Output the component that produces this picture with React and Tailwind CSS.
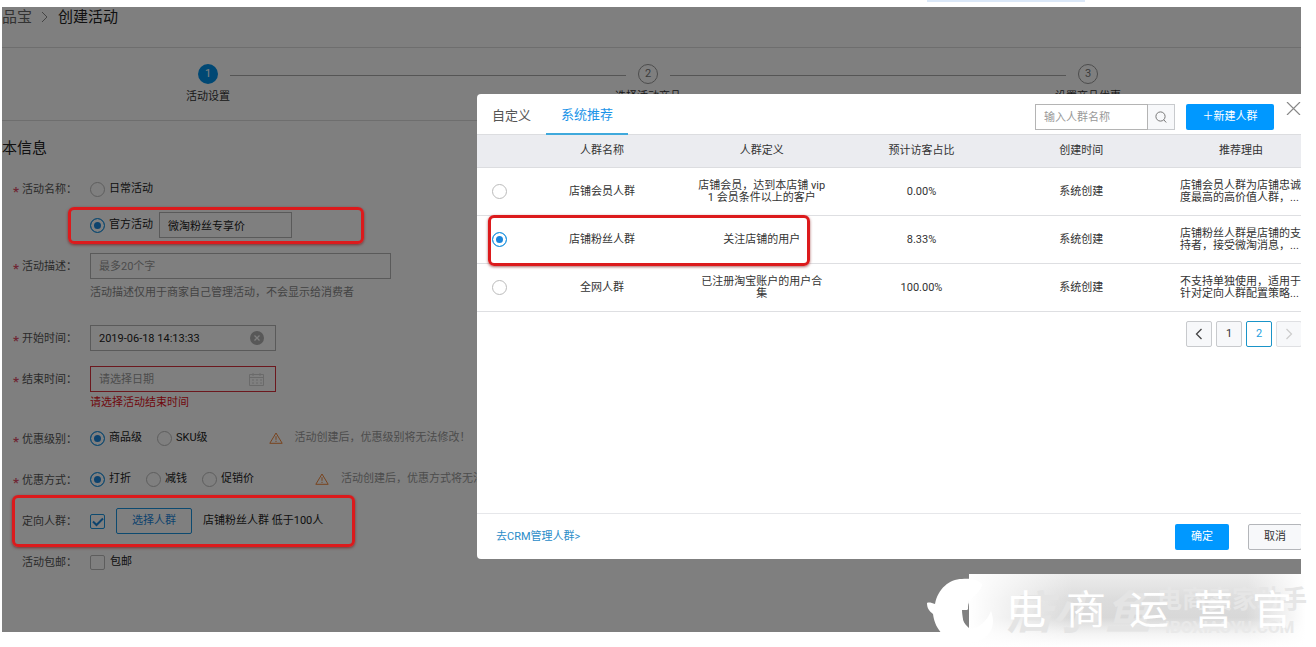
import React, { useState } from 'react';

const steps = ['活动设置', '选择活动商品', '设置商品优惠'];

const crowds = [
  {
    id: 'member',
    name: '店铺会员人群',
    definition: '店铺会员，达到本店铺 vip 1 会员条件以上的客户',
    ratio: '0.00%',
    reason: ['店铺会员人群为店铺忠诚', '度最高的高价值人群，...'],
  },
  {
    id: 'fans',
    name: '店铺粉丝人群',
    definition: '关注店铺的用户',
    ratio: '8.33%',
    reason: ['店铺粉丝人群是店铺的支', '持者，接受微淘消息，...'],
  },
  {
    id: 'all',
    name: '全网人群',
    definition: '已注册淘宝账户的用户合集',
    ratio: '100.00%',
    reason: ['不支持单独使用，适用于', '针对定向人群配置策略...'],
  },
];

const columns = ['人群名称', '人群定义', '预计访客占比', '创建时间', '推荐理由'];

const radioClass =
  'appearance-none shrink-0 size-[15px] rounded-full border border-[#bbb] bg-white checked:border-[#1a94e0] checked:bg-[#1a86dc] checked:shadow-[inset_0_0_0_3px_#fff]';

const inputClass =
  'h-[26px] border border-[#b4b4b4] bg-white px-2 leading-4 text-[#222] placeholder:text-[#999] focus:outline-none';

const Radio = ({ label, ...props }) => (
  <label className="flex items-center gap-1 text-[#222]">
    <input type="radio" className={radioClass} {...props} />
    {label}
  </label>
);

const Row = ({ label, htmlFor, required, children }) => (
  <div className="flex items-start">
    <div className="flex h-[26px] w-[88px] shrink-0 items-center pl-[11px] pt-[2px] text-[#555]">
      <span className="w-[9px] pt-1 text-[13px] font-bold text-[#e0506a]">{required && '*'}</span>
      <label htmlFor={htmlFor} className="whitespace-nowrap">{label}：</label>
    </div>
    <div className="min-w-0 flex-1">{children}</div>
  </div>
);

const Highlight = ({ className }) => (
  <div
    className={`pointer-events-none absolute z-20 rounded-md border-[3px] border-[#dc1a1c] shadow-[0_1px_3px_rgba(120,0,0,0.6)] ${className}`}
  />
);

const Warning = ({ children }) => (
  <p className="flex items-center gap-3 whitespace-nowrap text-[#999]">
    <svg width="14" height="12" viewBox="0 0 14 12" fill="none" stroke="#f0873c">
      <path d="M7 1 13.2 11.3H.8Z" strokeLinejoin="round" />
      <path d="M7 4.2v3.6M7 8.8v1.2" />
    </svg>
    {children}
  </p>
);

const Watermark = () => (
  <svg
    className="pointer-events-none absolute right-0 top-[574px] z-30"
    width="389"
    height="73"
    viewBox="0 0 389 73"
    fontFamily="'Noto Sans CJK SC', sans-serif"
  >
    <defs>
      <linearGradient id="wmBase" x1="0" y1="0" x2="0" y2="1">
        <stop offset="0" stopColor="#ececec" />
        <stop offset="0.35" stopColor="#dcdcdc" />
        <stop offset="0.6" stopColor="#d8d8d8" />
        <stop offset="0.82" stopColor="#f4f4f4" />
        <stop offset="1" stopColor="#fff" />
      </linearGradient>
      <linearGradient id="wmSides">
        <stop offset="0" stopColor="#fff" />
        <stop offset="0.3" stopColor="#fff" stopOpacity="0" />
        <stop offset="0.8" stopColor="#fff" stopOpacity="0" />
        <stop offset="0.97" stopColor="#fff" />
      </linearGradient>
    </defs>
    <rect x="42" width="347" height="73" fill="url(#wmBase)" />
    <rect x="42" width="347" height="73" fill="url(#wmSides)" />
    <path
      d="M0 29c2-1 5 0 8 1C11 15 22 5 35 5c9-1 16 1 20 5 0 5-5 9-11 16-3 3-3 6-3 9l-5 6c-1 6 2 10 8 14 8-1 16-8 20-18 3 8 3 17-3 24-7 7-17 8-27 7C20 67 8 57 6 40 2 37 0 34 0 29Z"
      fill="#fff"
    />
    <path d="M41 26v10h-6c0 7 2 13 7 18Z" fill="#808080" />
    <text y="55" fontSize="46" fontWeight="700" fontStyle="italic" fill="#e4e4e4">
      <tspan x="80">店</tspan>
      <tspan x="125">小</tspan>
      <tspan x="178">鱼</tspan>
    </text>
    <text x="230" y="34" fontSize="25" fontWeight="700" fill="#e6e6e6">电商卖家助手</text>
    <text x="238" y="59" fontSize="17" fontWeight="700" fill="#e9e9e9" fontFamily="Roboto, sans-serif">
      IBOXIAOYU.COM
    </text>
    <text y="50" fontSize="40" fontWeight="400" fill="#fff">
      <tspan x="79">电</tspan>
      <tspan x="139">商</tspan>
      <tspan x="202">运</tspan>
      <tspan x="266">营</tspan>
      <tspan x="325">官</tspan>
    </text>
  </svg>
);

const ActivityForm = () => {
  const [form, setForm] = useState({
    type: 'official',
    name: '微淘粉丝专享价',
    desc: '',
    start: '2019-06-18 14:13:33',
    end: '',
    level: 'item',
    method: 'discount',
    targeted: true,
    freeShipping: false,
  });

  const set = (key, value) => setForm({ ...form, [key]: value });

  return (
    <form className="flex flex-col gap-[15px] pb-[57px]" onSubmit={(e) => e.preventDefault()}>
      <Row label="活动名称" htmlFor="daily" required>
        <div className="flex h-[26px] items-center">
          <Radio id="daily" name="type" label="日常活动" checked={form.type === 'daily'} onChange={() => set('type', 'daily')} />
        </div>
        <div className="relative mt-[10px] flex h-[26px] items-center gap-[6px]">
          <Radio name="type" label="官方活动" checked={form.type === 'official'} onChange={() => set('type', 'official')} />
          <input
            aria-label="官方活动名称"
            className={`${inputClass} w-[133px]`}
            value={form.name}
            onChange={(e) => set('name', e.target.value)}
          />
          <Highlight className="-left-[22px] -top-[5px] h-[37px] w-[296px]" />
        </div>
      </Row>

      <Row label="活动描述" htmlFor="desc" required>
        <input
          id="desc"
          className={`${inputClass} block w-[301px]`}
          placeholder="最多20个字"
          value={form.desc}
          onChange={(e) => set('desc', e.target.value)}
        />
        <p className="mb-2 mt-[5px] leading-[18px] text-[#888]">活动描述仅用于商家自己管理活动，不会显示给消费者</p>
      </Row>

      <Row label="开始时间" htmlFor="start" required>
        <div className="relative w-[186px]">
          <input id="start" className={`${inputClass} block w-full`} value={form.start} onChange={(e) => set('start', e.target.value)} />
          <button type="button" aria-label="清除" className="absolute right-[12px] top-[6px]" onClick={() => set('start', '')}>
            <svg width="14" height="14" viewBox="0 0 14 14">
              <circle cx="7" cy="7" r="7" fill="#b0b0b0" />
              <path d="m4.5 4.5 5 5m0-5-5 5" stroke="#fff" strokeWidth="1.3" />
            </svg>
          </button>
        </div>
      </Row>

      <Row label="结束时间" htmlFor="end" required>
        <div className="relative w-[186px]">
          <input
            id="end"
            className="block h-[26px] w-full border border-[#d8303c] bg-white px-2 leading-4 placeholder:text-[#999] focus:outline-none"
            placeholder="请选择日期"
            value={form.end}
            onChange={(e) => set('end', e.target.value)}
          />
          <svg className="absolute right-[12px] top-[7px]" width="15" height="13" viewBox="0 0 15 13" fill="none" stroke="#d4d4d4">
            <path d="M.5 1.5h14v11H.5zM.5 4.5h14M4 0v3m7-3v3M3 7h2m2 0h2m2 0h2M3 10h2m2 0h2m2 0h2" />
          </svg>
        </div>
        <p className="mt-[3px] leading-4 text-[#e00f20]">请选择活动结束时间</p>
      </Row>

      <Row label="优惠级别" htmlFor="item" required>
        <div className="-mt-px flex h-[26px] items-center gap-[15px]">
          <Radio id="item" name="level" label="商品级" checked={form.level === 'item'} onChange={() => set('level', 'item')} />
          <Radio name="level" label="SKU级" checked={form.level === 'sku'} onChange={() => set('level', 'sku')} />
          <div className="ml-[46px]">
            <Warning>活动创建后，优惠级别将无法修改！</Warning>
          </div>
        </div>
      </Row>

      <Row label="优惠方式" htmlFor="discount" required>
        <div className="-mt-px flex h-[26px] items-center gap-[15px]">
          <Radio id="discount" name="method" label="打折" checked={form.method === 'discount'} onChange={() => set('method', 'discount')} />
          <Radio name="method" label="减钱" checked={form.method === 'minus'} onChange={() => set('method', 'minus')} />
          <Radio name="method" label="促销价" checked={form.method === 'promo'} onChange={() => set('method', 'promo')} />
          <div className="ml-[46px]">
            <Warning>活动创建后，优惠方式将无法修改！</Warning>
          </div>
        </div>
      </Row>

      <div className="relative">
        <Row label="定向人群" htmlFor="targeted">
          <div className="flex h-[26px] items-center gap-[11px]">
            <span className="relative size-[15px]">
              <input
                id="targeted"
                type="checkbox"
                className="block size-[15px] appearance-none rounded-xs border border-[#bbb] bg-white checked:border-[#1a94e0]"
                checked={form.targeted}
                onChange={(e) => set('targeted', e.target.checked)}
              />
              {form.targeted && (
                <svg className="pointer-events-none absolute inset-0" width="15" height="15" fill="none" stroke="#1a86dc" strokeWidth="2">
                  <path d="m3 7.5 3.5 3.5L13 4.5" />
                </svg>
              )}
            </span>
            <button type="button" className="h-[26px] w-[76px] rounded-xs border border-[#1a94e0] text-[#1a86dc]">
              选择人群
            </button>
            <span className="text-[#222]">店铺粉丝人群 低于100人</span>
          </div>
        </Row>
        <Highlight className="-top-[13px] left-[10px] h-[52px] w-[343px]" />
      </div>

      <Row label="活动包邮" htmlFor="shipping">
        <div className="flex h-[26px] items-center gap-[5px]">
          <input
            id="shipping"
            type="checkbox"
            className="size-[15px] appearance-none rounded-xs border border-[#bbb] bg-white checked:bg-[#1a86dc]"
            checked={form.freeShipping}
            onChange={(e) => set('freeShipping', e.target.checked)}
          />
          <span className="text-[#222]">包邮</span>
        </div>
      </Row>
    </form>
  );
};

const CrowdDialog = () => {
  const [selected, setSelected] = useState('fans');
  const [keyword, setKeyword] = useState('');

  return (
    <div
      role="dialog"
      aria-label="选择人群"
      className="-mr-5 ml-[475px] mt-[87px] flex min-w-0 flex-1 flex-col self-start rounded-sm bg-white text-[#333]"
    >
      <div className="flex h-10 items-start">
        <div role="tablist" className="relative flex text-[13px] leading-5">
          <button role="tab" className="h-[41px] px-[15px] pt-[2px] text-[#555]">自定义</button>
          <button role="tab" aria-selected="true" className="h-[41px] border-b-2 border-[#3fa9dc] px-[15px] pt-[3px] text-[#1a94e8]">
            系统推荐
          </button>
        </div>
        <div className="ml-auto mr-5 mt-[10px] flex">
          <input
            aria-label="输入人群名称"
            placeholder="输入人群名称"
            className={`${inputClass} w-[113px]`}
            value={keyword}
            onChange={(e) => setKeyword(e.target.value)}
          />
          <button
            aria-label="搜索"
            className="flex h-[26px] w-[27px] items-center justify-center border border-l-0 border-[#c8cacd] bg-[#f7f8fa]"
          >
            <svg width="12" height="12" viewBox="0 0 12 12" fill="none" stroke="#777">
              <circle cx="5.5" cy="5.5" r="4.6" />
              <path d="m8.8 8.8 2.4 2.7" />
            </svg>
          </button>
          <button className="ml-[11px] h-[26px] w-[88px] rounded-xs bg-[#0098ff] text-white">＋新建人群</button>
          <button aria-label="关闭" className="-mt-0.5 ml-3 self-start">
            <svg width="15" height="13" viewBox="0 0 15 13" stroke="#888" strokeWidth="1.2">
              <path d="m1 0 13 13M14 0 1 13" />
            </svg>
          </button>
        </div>
      </div>

      <table className="w-full table-fixed border-collapse text-center">
        <thead>
          <tr className="h-[33px] border-y border-[#dcdde0] bg-[#ebecf0]">
            <th className="w-[45px]" />
            {columns.map((col) => (
              <th key={col} className="font-normal">{col}</th>
            ))}
          </tr>
        </thead>
        <tbody>
          {crowds.map((crowd) => (
            <tr key={crowd.id} className="relative h-12 border-b border-[#dedfe2] leading-3">
              <td>
                <input
                  type="radio"
                  name="crowd"
                  aria-label={crowd.name}
                  className={`${radioClass} mx-auto block`}
                  checked={selected === crowd.id}
                  onChange={() => setSelected(crowd.id)}
                />
                {crowd.id === 'fans' && <Highlight className="-top-px left-[11px] h-[51px] w-[322px]" />}
              </td>
              <td>{crowd.name}</td>
              <td className="px-[15px]">{crowd.definition}</td>
              <td>{crowd.ratio}</td>
              <td>系统创建</td>
              <td>
                <div className="mx-auto w-[122px] whitespace-nowrap text-left">
                  {crowd.reason[0]}
                  <br />
                  {crowd.reason[1]}
                </div>
              </td>
            </tr>
          ))}
        </tbody>
      </table>

      <nav aria-label="分页" className="mb-[166px] mr-[19px] mt-[9px] flex justify-end gap-1">
        <button aria-label="上一页" className="flex size-[26px] items-center justify-center rounded-xs border border-[#c8cacd] bg-[#f7f8fa]">
          <svg width="8" height="12" fill="none" stroke="#444" strokeWidth="1.3"><path d="M6.5 1 1.5 6l5 5" /></svg>
        </button>
        <button className="size-[26px] rounded-xs border border-[#c8cacd] bg-[#f7f8fa]">1</button>
        <button aria-current="page" className="size-[26px] rounded-xs border border-[#1a94c8] text-[#1aa0e0]">2</button>
        <button
          disabled
          aria-label="下一页"
          className="flex size-[26px] items-center justify-center rounded-xs border border-[#dfe0e3] bg-[#f7f8fa]"
        >
          <svg width="8" height="12" fill="none" stroke="#ccc" strokeWidth="1.2"><path d="m1.5 1 5 5-5 5" /></svg>
        </button>
      </nav>

      <div className="flex h-[46px] items-center border-t border-[#e6e7ea] px-[19px]">
        <a href="#crm" className="mr-auto text-[#2a8cc8]">去CRM管理人群&gt;</a>
        <button className="h-[26px] w-[54px] rounded-xs bg-[#0098ff] text-white">确定</button>
        <button className="ml-[19px] h-[26px] w-[54px] rounded-xs border border-[#b4b6ba] bg-[#f7f8fa]">取消</button>
      </div>
    </div>
  );
};

const App = () => {
  return (
    <div className="relative min-h-screen bg-white font-[Roboto,'Noto_Sans_CJK_SC',sans-serif] text-[11px] leading-4">
      <div className="flex h-[7px] items-start justify-end pr-[231px]">
        <div className="h-[2px] w-[158px] bg-[#dbe8f8]" />
      </div>

      <main className="relative ml-[2px] mr-[15px] overflow-hidden">
        <header className="flex h-[41px] items-start gap-2 border-b border-[#ddd] text-[15px] leading-5">
          <a href="#home" className="text-[#666]">品宝</a>
          <svg className="mt-[5px]" width="10" height="10" fill="none" stroke="#888"><path d="m2 0 5 5-5 5" /></svg>
          <h1 className="text-[#222]">创建活动</h1>
        </header>

        <ol className="flex h-[73px] items-start border-b border-[#ddd] pl-[184px] pr-[191px] pt-4">
          {steps.map((step, i) => (
            <React.Fragment key={step}>
              {i > 0 && <li aria-hidden="true" className="mt-[11px] h-px flex-1 bg-[#aaa]" />}
              <li className="flex w-11 flex-col items-center gap-[5px] whitespace-nowrap text-[#333]">
                <span
                  className={
                    i === 0
                      ? 'flex size-5 items-center justify-center rounded-full bg-[#0090e8] text-white'
                      : 'flex size-5 items-center justify-center rounded-full border border-[#999] text-[#777]'
                  }
                >
                  {i + 1}
                </span>
                {step}
              </li>
            </React.Fragment>
          ))}
        </ol>

        <h2 className="mb-[17px] mt-4 text-[15px] leading-[22px] text-[#222]">本信息</h2>
        <ActivityForm />

        <div className="absolute inset-0 z-10 bg-black/50" />
        <div className="absolute inset-0 z-10 flex">
          <CrowdDialog />
        </div>
      </main>

      <Watermark />
    </div>
  );
};

export default App;
